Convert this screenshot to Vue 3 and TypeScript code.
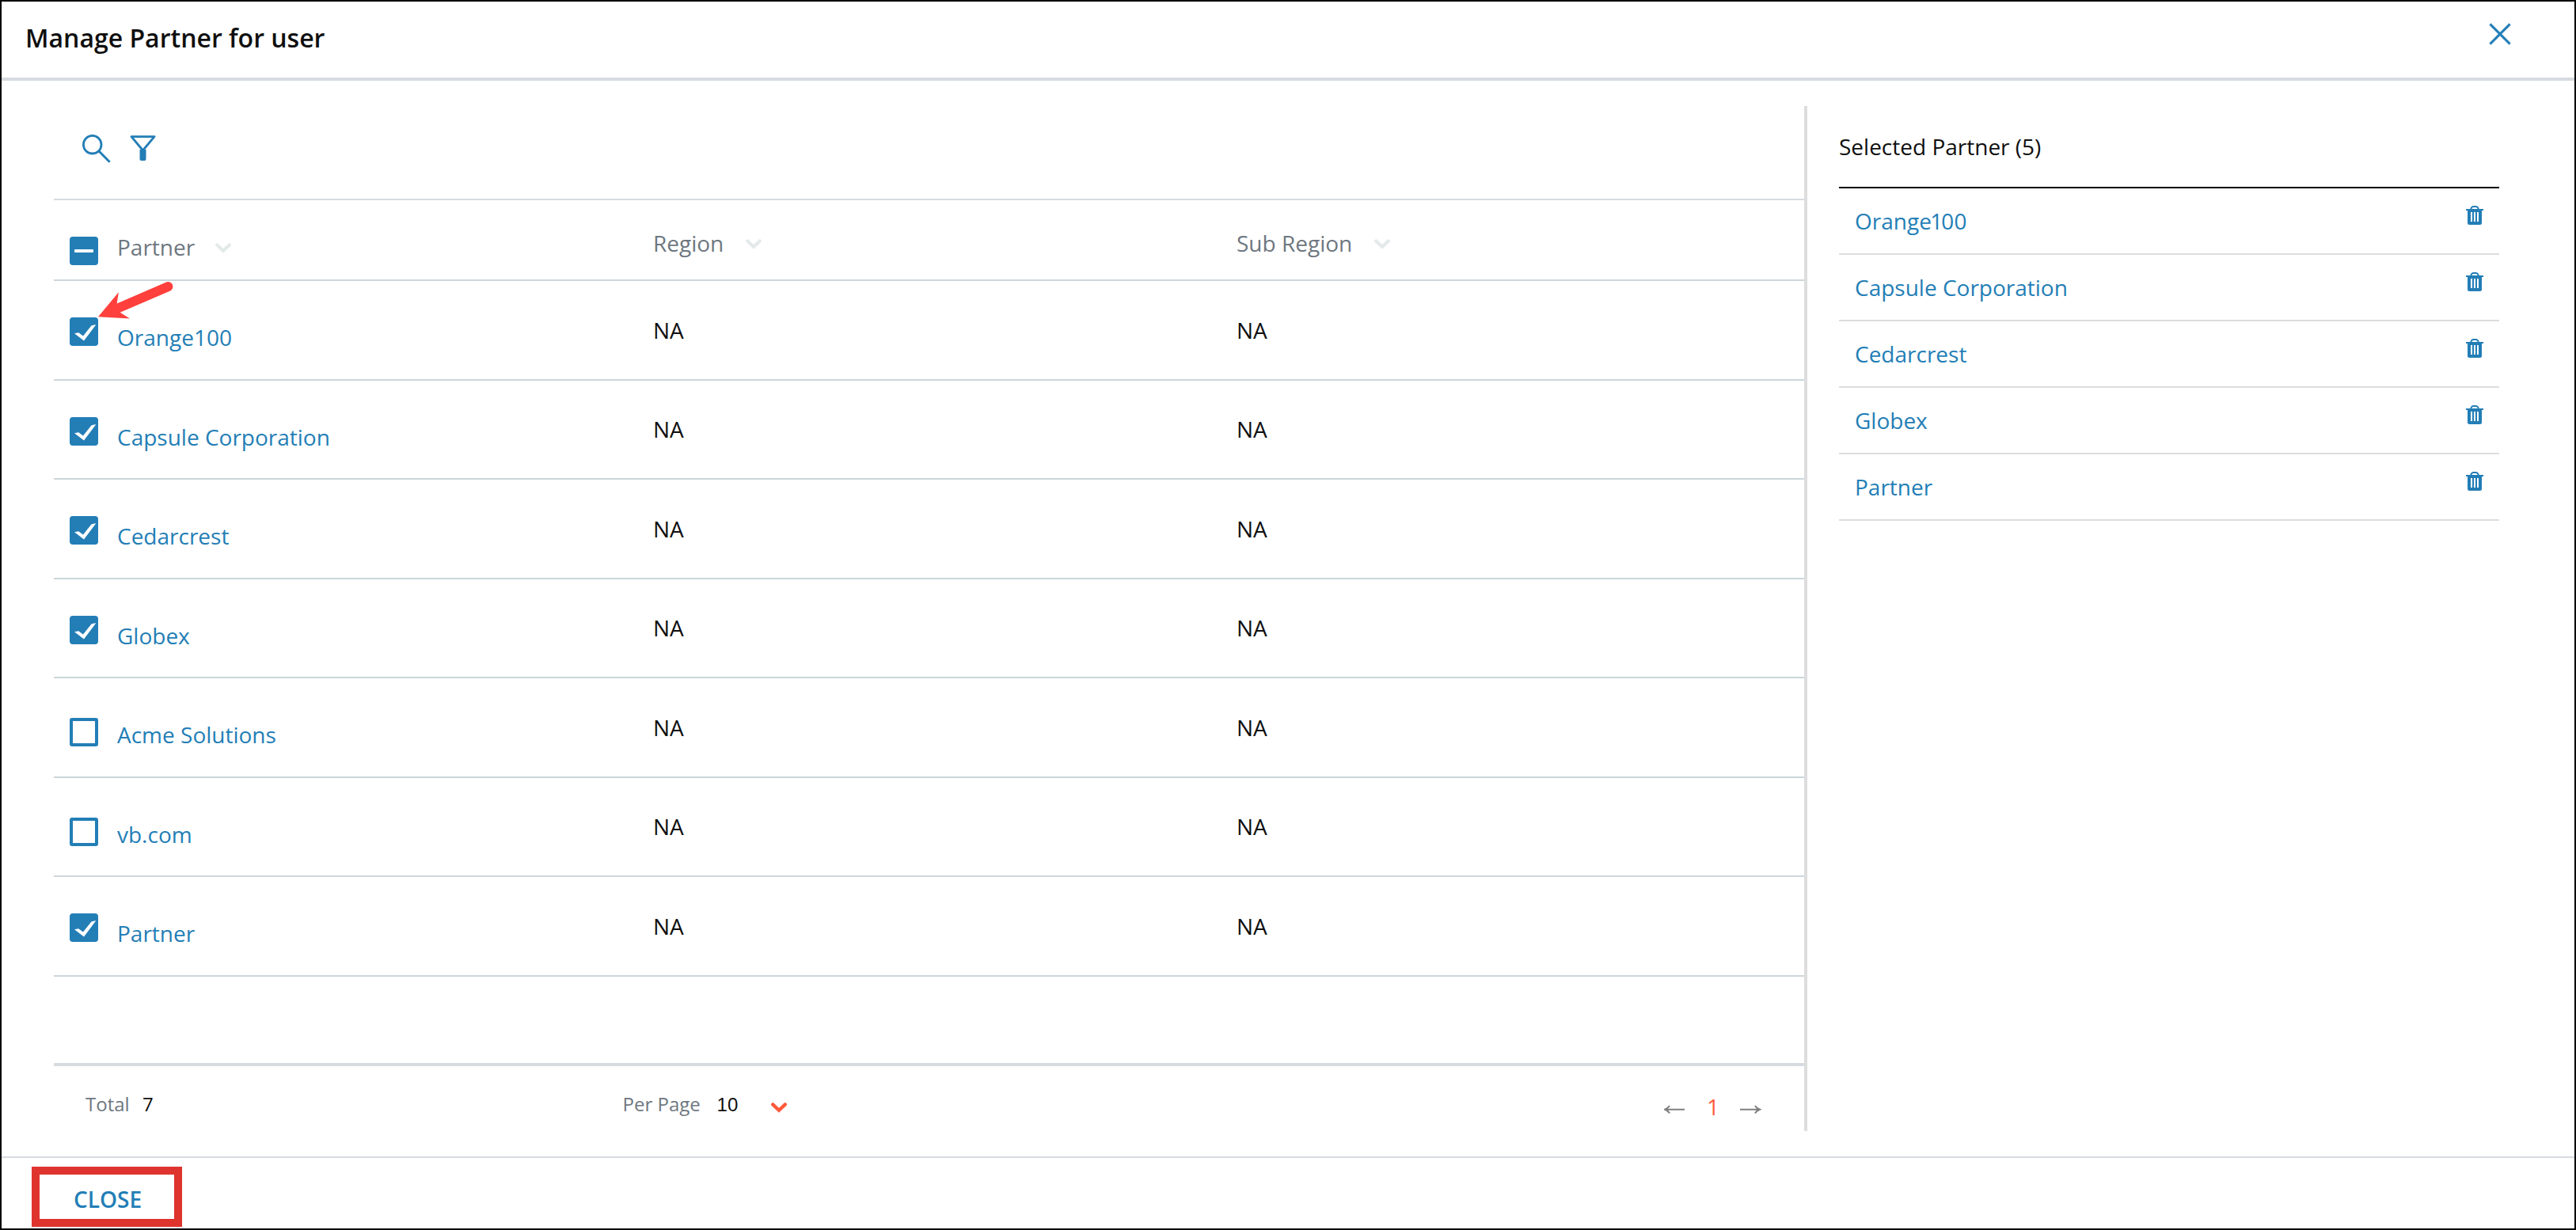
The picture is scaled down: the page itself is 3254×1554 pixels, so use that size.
<script setup lang="ts">
interface Partner {
  name: string
  region: string
  subRegion: string
  checked: boolean
}

const partners: Partner[] = [
  { name: 'Orange100', region: 'NA', subRegion: 'NA', checked: true },
  { name: 'Capsule Corporation', region: 'NA', subRegion: 'NA', checked: true },
  { name: 'Cedarcrest', region: 'NA', subRegion: 'NA', checked: true },
  { name: 'Globex', region: 'NA', subRegion: 'NA', checked: true },
  { name: 'Acme Solutions', region: 'NA', subRegion: 'NA', checked: false },
  { name: 'vb.com', region: 'NA', subRegion: 'NA', checked: false },
  { name: 'Partner', region: 'NA', subRegion: 'NA', checked: true },
]

const selected = partners.filter((p) => p.checked)
</script>

<template>
  <div class="dialog">
    <header class="dialog-header">
      <h1 class="title">Manage Partner for user</h1>
      <svg class="close-icon" width="28" height="28" viewBox="0 0 28 28">
        <path d="M1.4 1.4 26.6 26.6M26.6 1.4 1.4 26.6" fill="none" stroke="#237eb6" stroke-width="3" />
      </svg>
    </header>

    <main class="body">
      <section class="list">
        <div class="tools">
          <svg class="search" width="37" height="37" viewBox="0 0 37 37">
            <circle cx="13.7" cy="13.7" r="11.3" fill="none" stroke="#237eb6" stroke-width="2.8" />
            <path d="M21.8 21.8 35.6 35.8" fill="none" stroke="#237eb6" stroke-width="3" />
          </svg>
          <svg class="filter" width="33" height="33" viewBox="0 0 33 33">
            <path d="M2 1.6H31L16.5 19Z" fill="none" stroke="#237eb6" stroke-width="2.8" stroke-linejoin="round" />
            <path d="M12.5 18H20.5V30Q20.5 32 18.5 32H14.5Q12.5 32 12.5 30Z" fill="#237eb6" />
          </svg>
        </div>

        <div class="row head">
          <div class="cell partner">
            <span class="box on">
              <svg width="36" height="36" viewBox="0 0 36 36"><rect x="6" y="16" width="24" height="4" rx="1" fill="#fff" /></svg>
            </span>
            <span class="label">Partner</span>
            <svg class="chevron" width="20" height="13" viewBox="0 0 20 13"><path d="M2.2 2.4 10 9.8 17.8 2.4" /></svg>
          </div>
          <div class="cell">
            <span class="label">Region</span>
            <svg class="chevron" width="20" height="13" viewBox="0 0 20 13"><path d="M2.2 2.4 10 9.8 17.8 2.4" /></svg>
          </div>
          <div class="cell">
            <span class="label">Sub Region</span>
            <svg class="chevron" width="20" height="13" viewBox="0 0 20 13"><path d="M2.2 2.4 10 9.8 17.8 2.4" /></svg>
          </div>
        </div>

        <div v-for="p in partners" :key="p.name" class="row item">
          <div class="cell partner">
            <span class="box" :class="p.checked ? 'on' : 'off'">
              <svg v-if="p.checked" width="36" height="36" viewBox="0 0 36 36">
                <path d="M6 20.2 11.2 19.2 17 23.6 27.4 10.6Q28 9.8 33.2 9.2L18 29.5Z" fill="#fff" />
              </svg>
            </span>
            <a class="name">{{ p.name }}</a>
          </div>
          <div class="cell value">{{ p.region }}</div>
          <div class="cell value">{{ p.subRegion }}</div>
        </div>

        <div class="pager">
          <span class="muted total">Total</span>
          <span class="count">7</span>
          <span class="muted per">Per Page</span>
          <span class="size">10</span>
          <svg class="size-chevron" width="20" height="13" viewBox="0 0 20 13"><path d="M2.2 2.4 10 9.8 17.8 2.4" /></svg>
          <svg class="prev" width="27" height="12" viewBox="0 0 27 12">
            <path d="M26 5.7H1M7 1Q5 4.4 1 5.7Q5 7 7 10.6" fill="none" stroke="#808080" stroke-width="2" />
          </svg>
          <span class="page">1</span>
          <svg class="next" width="27" height="12" viewBox="0 0 27 12">
            <path d="M0 5.7H25M19 1Q21 4.4 25 5.7Q21 7 19 10.6" fill="none" stroke="#808080" stroke-width="2" />
          </svg>
        </div>
      </section>

      <aside class="selected">
        <h2 class="selected-title">Selected Partner ({{ selected.length }})</h2>
        <ul class="selected-list">
          <li v-for="p in selected" :key="p.name">
            <a>{{ p.name }}</a>
            <svg class="trash" width="22" height="24" viewBox="0 0 22 24">
              <path d="M6.5 5V3.2Q7.5 1 9 1H13Q14.5 1 15.5 3.2V5" fill="none" stroke="#237eb6" stroke-width="2" />
              <rect x="0" y="4" width="22" height="2" fill="#237eb6" />
              <path d="M2 5H20V21.5Q20 24 17.5 24H4.5Q2 24 2 21.5Z" fill="#237eb6" />
              <path d="M7 8V20M11 8V20M15 8V20" stroke="#fff" stroke-width="2" />
            </svg>
          </li>
        </ul>
      </aside>
    </main>

    <footer class="dialog-footer">
      <button class="close-button" type="button">CLOSE</button>
    </footer>

    <svg class="pointer" width="96" height="50" viewBox="0 0 96 50">
      <path d="M1 45.2 26.8 14.3 24.7 28.5 87 1.4A6 6 0 0 1 91.5 12.7L28.7 39.7 41 47.5Z" fill="#ff403c" />
    </svg>
  </div>
</template>

<style>
body {
  margin: 0;
}
</style>

<style scoped>
.dialog {
  position: relative;
  box-sizing: border-box;
  width: 3254px;
  height: 1554px;
  border: 2px solid #000;
  background: #fff;
  display: flex;
  flex-direction: column;
  font-family: 'Open Sans', sans-serif;
  font-size: 28px;
  line-height: 38px;
  color: #0f0f0f;
}
.dialog-header {
  box-sizing: border-box;
  height: 100px;
  border-bottom: 4px solid #d5dbe0;
  display: flex;
  justify-content: space-between;
  align-items: flex-start;
  padding: 24px 80px 0 30px;
}
.title {
  margin: 0;
  font-size: 32px;
  line-height: 44px;
  font-weight: 600;
}
.close-icon {
  margin-top: 3px;
}
.body {
  display: flex;
  height: 1295px;
  padding: 32px 0 32px 66px;
}
.list {
  width: 2211px;
  border-right: 4px solid #ddd;
  display: flex;
  flex-direction: column;
}
.tools {
  box-sizing: border-box;
  height: 119px;
  border-bottom: 2px solid #d5dbe0;
  display: flex;
  padding: 35px 0 0 35px;
}
.filter {
  margin: 2px 0 0 23.5px;
}
.row {
  box-sizing: border-box;
  display: grid;
  grid-template-columns: 757px 737px 1fr;
  border-bottom: 2px solid #ccd6db;
}
.head {
  height: 102px;
  color: #6e7780;
}
.head .cell {
  display: flex;
  align-items: flex-start;
  padding-top: 35px;
}
.head .cell.partner {
  padding-top: 40px;
}
.head .box {
  margin-top: 6px;
}
.chevron {
  margin: 14px 0 0 27.5px;
}
.partner .chevron {
  margin-left: 26px;
}
.chevron path {
  fill: none;
  stroke: #e4e9ea;
  stroke-width: 4.2;
  stroke-linecap: round;
}
.item {
  height: 126px;
}
.item:nth-child(even) {
  height: 125px;
}
.item .value {
  padding-top: 43px;
}
.item:nth-child(even) .value {
  padding-top: 42px;
}
.item .cell.partner {
  padding-top: 46px;
}
.partner {
  display: flex;
  align-items: flex-start;
  padding-left: 20px;
}
.box {
  box-sizing: border-box;
  width: 36px;
  height: 36px;
  margin-right: 24px;
  border-radius: 4px;
}
.box svg {
  display: block;
}
.box.on {
  background: #237eb6;
}
.box.off {
  border: 4px solid #237eb6;
  border-radius: 3px;
  margin-top: 4px;
}
.name {
  margin-top: 6px;
  color: #237eb6;
}
.box.off + .name {
  margin-top: 6px;
}
.pager {
  box-sizing: border-box;
  margin-top: 109px;
  height: 86px;
  border-top: 4px solid #d5dbe0;
  display: flex;
  align-items: flex-start;
  padding: 32px 54px 0 40px;
  font-size: 24px;
  line-height: 32px;
}
.muted {
  color: #6e7780;
}
.total {
  width: 72px;
}
.count {
  width: 606.6px;
}
.per {
  width: 119px;
}
.size {
  margin-top: 1px;
  font-family: 'Liberation Sans', Arial, sans-serif;
  color: #0f0f0f;
}
.size-chevron {
  margin: 14px auto 0 42px;
}
.size-chevron path {
  fill: none;
  stroke: #ff5a3c;
  stroke-width: 4.4;
  stroke-linecap: round;
}
.prev,
.next {
  margin-top: 17px;
}
.page {
  width: 16px;
  margin: 0 26px 0 27px;
  font-size: 28px;
  line-height: 38px;
  color: #ff5a3c;
}
.selected {
  width: 834px;
  margin-left: 40px;
}
.selected-title {
  margin: 0;
  box-sizing: border-box;
  height: 104px;
  padding-top: 32px;
  border-bottom: 2px solid #000;
  font-size: 28px;
  font-weight: 400;
  line-height: 38px;
}
.selected-list {
  list-style: none;
  margin: 0;
  padding: 0;
  font-variant-numeric: proportional-nums;
}
.selected-list li {
  box-sizing: border-box;
  height: 84px;
  display: flex;
  justify-content: space-between;
  align-items: flex-start;
  padding: 22px 20px 0 20px;
  border-bottom: 2px solid #ddd;
  color: #237eb6;
}
.dialog-footer {
  border-top: 2px solid #d5dbe0;
  display: flex;
  padding: 11px 0 0 38px;
}
.close-button {
  box-sizing: border-box;
  width: 190px;
  height: 76px;
  border: 10px solid #df332e;
  background: #fff;
  padding: 12px 0 8px 43px;
  text-align: left;
  font: 600 28px/38px 'Open Sans', sans-serif;
  color: #237eb6;
}
/* Callout arrow laid over the first row */
.pointer {
  position: absolute;
  left: 121px;
  top: 353px;
}
</style>
